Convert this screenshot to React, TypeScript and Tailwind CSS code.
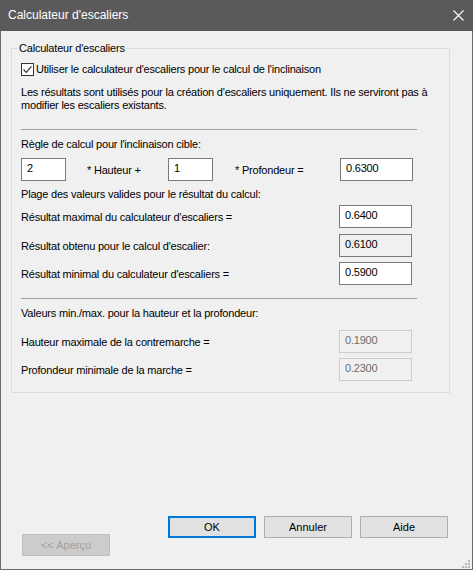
import React from "react";

const font = { fontFamily: '"Liberation Sans", Arial, sans-serif' };

function Box({ value, variant = "edit" }: { value: string; variant?: "edit" | "readonly" | "disabled" }) {
  const cls =
    variant === "edit"
      ? "bg-white border-[#7a7a7a] text-black"
      : variant === "readonly"
      ? "bg-[#f0f0f0] border-[#7a7a7a] text-black"
      : "bg-[#f0f0f0] border-[#cccccc] text-[#6d6d6d]";
  return (
    <div className={`w-[73px] h-[23px] border pl-[5px] pt-[2px] text-[11px] leading-[15px] ${cls}`}>{value}</div>
  );
}

function Row({ label, value, variant, mt }: { label: string; value: string; variant?: "edit" | "readonly" | "disabled"; mt: string }) {
  return (
    <div className={`flex items-center h-[23px] w-[391px] justify-between ${mt}`}>
      <span className="pt-[1px]">{label}</span>
      <Box value={value} variant={variant} />
    </div>
  );
}

function Btn({ children, primary, disabled }: { children: React.ReactNode; primary?: boolean; disabled?: boolean }) {
  const cls = primary
    ? "border-2 border-[#0078d7] bg-[#e1e1e1] text-black"
    : disabled
    ? "border border-[#bfbfbf] bg-[#cccccc] text-[#a0a0a0]"
    : "border border-[#adadad] bg-[#e1e1e1] text-black";
  return (
    <div className={`w-[88px] h-[22px] flex items-center justify-center text-[11px] tracking-[0px] ${cls}`}>{children}</div>
  );
}

export default function App() {
  return (
    <div
      className="w-[473px] h-[570px] flex flex-col bg-[#f0f0f0] border border-t-0 border-[#6b6b6b] text-[11px] tracking-[-0.2px] text-black"
      style={font}
    >
      {/* title bar */}
      <div className="h-[31px] bg-[#5a5a5a] flex items-center justify-between pl-[8px] pr-[9px] -mx-[1px]">
        <span className="text-white text-[12px] tracking-[0px] pb-[1px]">Calculateur d'escaliers</span>
        <svg width="11" height="11" viewBox="0 0 11 11">
          <path d="M0.5 0.5 L10.5 10.5 M10.5 0.5 L0.5 10.5" stroke="#ffffff" strokeWidth="1.1" />
        </svg>
      </div>

      {/* group box */}
      <div className="relative mt-[17px] ml-[10px] w-[439px] border border-[#dcdcdc] pl-[9px] pb-[11px]">
        <span className="absolute -top-[8px] left-[6px] px-[1px] bg-[#f0f0f0] leading-[14px]">Calculateur d'escaliers</span>

        <div className="flex items-center mt-[14px] h-[13px]">
          <div className="w-[13px] h-[13px] border border-[#333333] bg-white flex items-center justify-center">
            <svg width="11" height="11" viewBox="0 0 11 11">
              <path d="M1.5 5.5 L4.2 8.3 L9.5 2.3" fill="none" stroke="#333333" strokeWidth="1.2" />
            </svg>
          </div>
          <span className="ml-[2px]">Utiliser le calculateur d'escaliers pour le calcul de l'inclinaison</span>
        </div>

        <p className="mt-[10px] w-[425px] leading-[13px]">
          Les résultats sont utilisés pour la création d'escaliers uniquement. Ils ne serviront pas à modifier les escaliers existants.
        </p>

        <div className="mt-[17px] w-[396px] h-[1px] bg-[#a0a0a0]" />

        <div className="mt-[7px] leading-[15px]">Règle de calcul pour l'inclinaison cible:</div>

        <div className="mt-[6px] flex items-center h-[23px]">
          <div className="w-[45px] h-[23px] border border-[#7a7a7a] bg-white pl-[5px] pt-[2px] leading-[15px]">2</div>
          <span className="ml-[21px] w-[81px] pt-[1px]">* Hauteur +</span>
          <div className="w-[45px] h-[23px] border border-[#7a7a7a] bg-white pl-[5px] pt-[2px] leading-[15px]">1</div>
          <span className="ml-[22px] w-[105px] pt-[2px]">* Profondeur =</span>
          <Box value="0.6300" />
        </div>

        <div className="mt-[6px] leading-[15px]">Plage des valeurs valides pour le résultat du calcul:</div>

        <Row mt="mt-[3px]" label="Résultat maximal du calculateur d'escaliers =" value="0.6400" />
        <Row mt="mt-[6px]" label="Résultat obtenu pour le calcul d'escalier:" value="0.6100" variant="readonly" />
        <Row mt="mt-[5px]" label="Résultat minimal du calculateur d'escaliers =" value="0.5900" />

        <div className="mt-[13px] w-[396px] h-[1px] bg-[#a0a0a0]" />

        <div className="mt-[7px] leading-[15px]">Valeurs min./max. pour la hauteur et la profondeur:</div>

        <Row mt="mt-[9px]" label="Hauteur maximale de la contremarche =" value="0.1900" variant="disabled" />
        <Row mt="mt-[5px]" label="Profondeur minimale de la marche =" value="0.2300" variant="disabled" />
      </div>

      <div className="flex-1" />

      {/* buttons */}
      <div className="relative flex justify-between items-start pl-[21px] pr-[24px] pb-[13px]">
        <div className="mt-[18px]">
          <Btn disabled>&lt;&lt; Aperçu</Btn>
        </div>
        <div className="flex gap-[8px]">
          <Btn primary>OK</Btn>
          <Btn>Annuler</Btn>
          <Btn>Aide</Btn>
        </div>
        <svg className="absolute right-[1px] bottom-[0px]" width="9" height="9" viewBox="0 0 9 9">
          <rect x="6" y="0" width="2" height="2" fill="#b8b8b8" />
          <rect x="3" y="3" width="2" height="2" fill="#b8b8b8" />
          <rect x="6" y="3" width="2" height="2" fill="#b8b8b8" />
          <rect x="0" y="6" width="2" height="2" fill="#b8b8b8" />
          <rect x="3" y="6" width="2" height="2" fill="#b8b8b8" />
          <rect x="6" y="6" width="2" height="2" fill="#b8b8b8" />
        </svg>
      </div>
    </div>
  );
}
